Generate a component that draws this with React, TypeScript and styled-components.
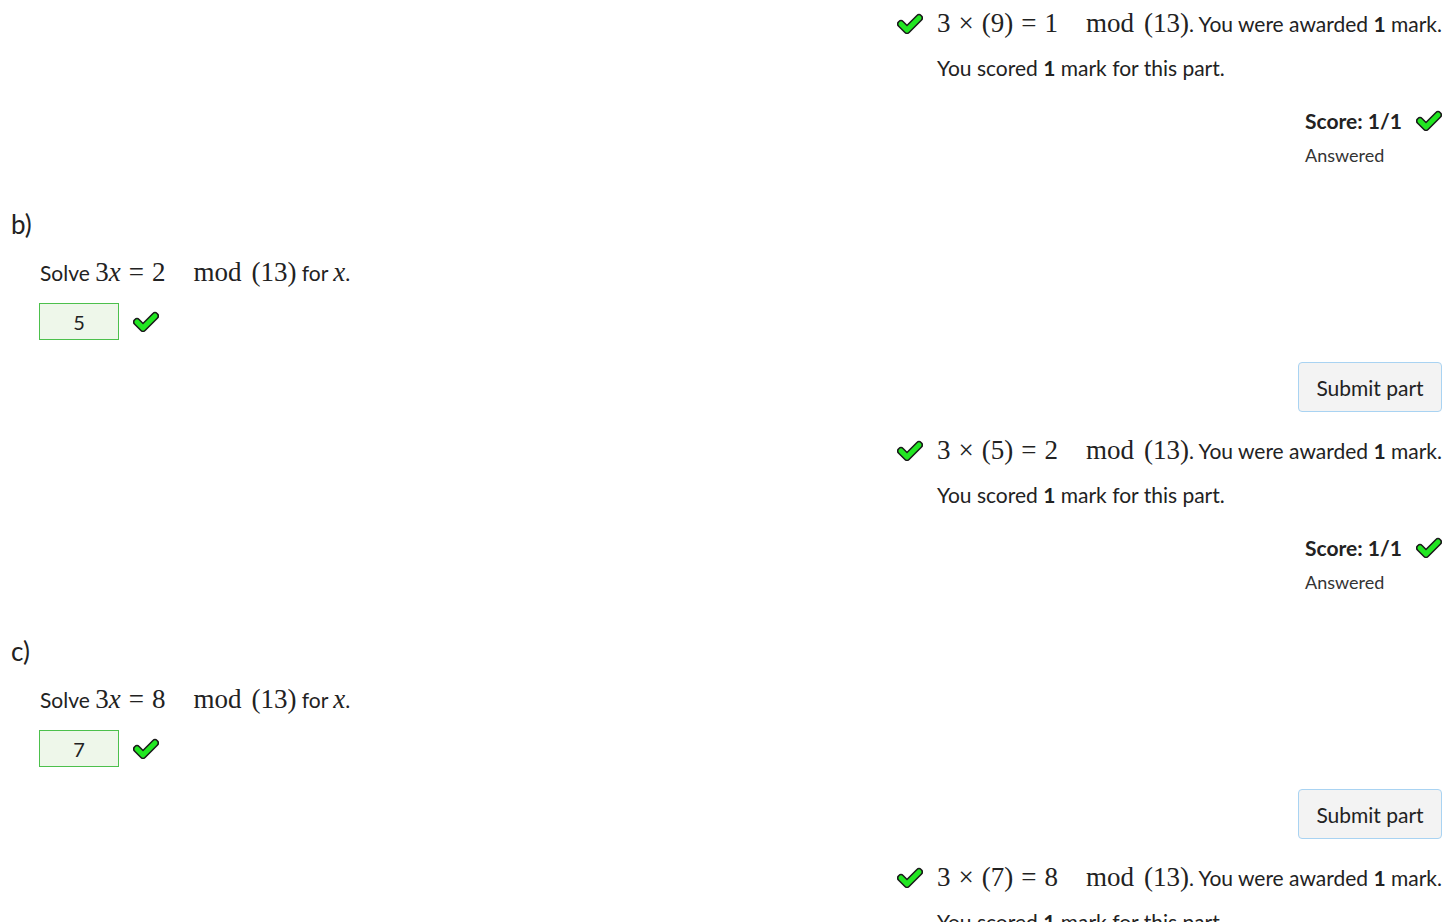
import { createGlobalStyle, styled } from "styled-components";

const GlobalStyle = createGlobalStyle`
  html, body {
    margin: 0;
    padding: 0;
    background: #fff;
  }
  body {
    font-family: Lato, "Open Sans", sans-serif;
    color: #222;
    font-size: 21px;
    overflow: hidden;
  }
`;

const Page = styled.div`
  width: 1450px;
  box-sizing: border-box;
  padding: 8px 8px 0 11px;
  display: flex;
  flex-direction: column;
  & > * {
    flex-shrink: 0;
  }
`;

const FeedbackBlock = styled.div`
  align-self: flex-end;
  display: flex;
  flex-direction: column;
  gap: 17px;
`;

const FeedbackLine = styled.div`
  display: flex;
  align-items: center;
  gap: 14px;
  white-space: nowrap;
`;

const ScoredLine = styled.div`
  padding-left: 40px;
`;

const Math = styled.span`
  font-family: "Liberation Serif", "DejaVu Serif", serif;
  font-size: 27px;
  line-height: 30px;
`;

const Var = styled.i`
  font-family: "Liberation Serif", "DejaVu Serif", serif;
  font-style: italic;
`;

const Op = styled.span<{ $gap?: number }>`
  display: inline-block;
  margin: 0 ${(p) => p.$gap ?? 8}px;
`;

const ScoreBox = styled.div`
  align-self: flex-end;
  margin-top: 28px;
  display: flex;
  flex-direction: column;
  gap: 11px;
`;

const ScoreLine = styled.div`
  display: flex;
  align-items: center;
  gap: 14px;
  font-weight: 700;
`;

const Answered = styled.div`
  font-size: 18px;
  color: #333;
`;

const PartLabel = styled.div`
  font-size: 26px;
  margin-top: 42px;
`;

const Prompt = styled.div`
  padding-left: 29px;
  margin-top: 17px;
  white-space: nowrap;
`;

const AnswerRow = styled.div`
  padding-left: 28px;
  margin-top: 16px;
  display: flex;
  align-items: center;
  gap: 14px;
`;

const AnswerBox = styled.div`
  width: 80px;
  height: 37px;
  box-sizing: border-box;
  border: 1px solid #4cc04c;
  background: #eef7ea;
  display: flex;
  align-items: center;
  justify-content: center;
  font-size: 20px;
`;

const SubmitButton = styled.button`
  align-self: flex-end;
  margin-top: 22px;
  margin-bottom: 23px;
  width: 144px;
  height: 50px;
  border: 1px solid #a9d3f2;
  border-radius: 4px;
  background: #f3f3f3;
  font-family: inherit;
  font-size: 21px;
  color: #222;
`;

function Tick() {
  return (
    <svg width="26" height="21" viewBox="0 0 26 21">
      <polyline
        points="4,11 10,17 22,5"
        fill="none"
        stroke="#1a1a1a"
        strokeWidth="8"
        strokeLinecap="round"
        strokeLinejoin="round"
      />
      <polyline
        points="4,11 10,17 22,5"
        fill="none"
        stroke="#22e622"
        strokeWidth="5"
        strokeLinecap="round"
        strokeLinejoin="round"
      />
    </svg>
  );
}

function Pmod() {
  return (
    <>
      <Op $gap={14}> </Op>mod<Op $gap={5}> </Op>(13)
    </>
  );
}

function Congruence({ a, b }: { a: number; b: number }) {
  return (
    <Math>
      3<Op>×</Op>({a})<Op>=</Op>
      {b}
      <Pmod />
    </Math>
  );
}

function PartFeedback({ a, b }: { a: number; b: number }) {
  return (
    <>
      <FeedbackBlock>
        <FeedbackLine>
          <Tick />
          <span>
            <Congruence a={a} b={b} />. You were awarded <b>1</b> mark.
          </span>
        </FeedbackLine>
        <ScoredLine>
          You scored <b>1</b> mark for this part.
        </ScoredLine>
      </FeedbackBlock>
      <ScoreBox>
        <ScoreLine>
          Score: 1/1
          <Tick />
        </ScoreLine>
        <Answered>Answered</Answered>
      </ScoreBox>
    </>
  );
}

function Part({ label, rhs, answer }: { label: string; rhs: number; answer: number }) {
  return (
    <>
      <PartLabel>{label}</PartLabel>
      <Prompt>
        Solve{" "}
        <Math>
          3<Var>x</Var>
          <Op>=</Op>
          {rhs}
          <Pmod />
        </Math>{" "}
        for <Math><Var>x</Var></Math>.
      </Prompt>
      <AnswerRow>
        <AnswerBox>{answer}</AnswerBox>
        <Tick />
      </AnswerRow>
      <SubmitButton>Submit part</SubmitButton>
    </>
  );
}

export default function App() {
  return (
    <>
      <GlobalStyle />
      <Page>
        <PartFeedback a={9} b={1} />
        <Part label="b)" rhs={2} answer={5} />
        <PartFeedback a={5} b={2} />
        <Part label="c)" rhs={8} answer={7} />
        <PartFeedback a={7} b={8} />
      </Page>
    </>
  );
}
